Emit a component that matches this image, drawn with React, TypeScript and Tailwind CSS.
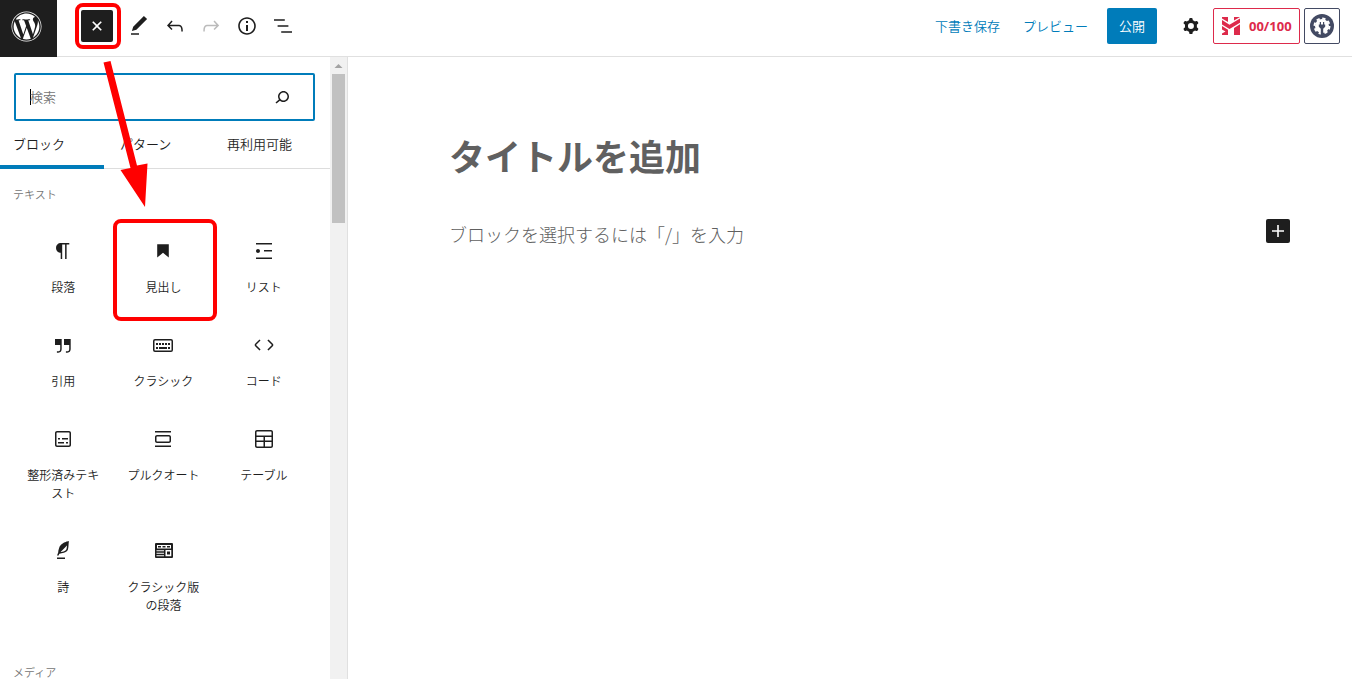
import React, { useState } from 'react';
import { FaWordpress } from 'react-icons/fa';

interface IconProps {
  path: string;
  className?: string;
}

const Icon: React.FC<IconProps> = ({ path, className = 'w-6 h-6' }) => (
  <svg viewBox="0 0 24 24" className={className} fill="currentColor" fillRule="evenodd" aria-hidden="true">
    <path d={path} />
  </svg>
);

const icons = {
  plus: 'M18 11.2h-5.2V6h-1.6v5.2H6v1.6h5.2V18h1.6v-5.2H18z',
  edit: 'M20.1 5.1L16.9 2 6.2 12.7l-1.3 4.4 4.5-1.3L20.1 5.1zM4 20.8h8v-1.5H4v1.5z',
  undo: 'M18.3 11.7c-.6-.6-1.4-.9-2.3-.9H6.7l2.9-3.3-1.1-1-4.5 5L8.5 16l1-1-2.7-2.7H16c.5 0 .9.2 1.3.5 1 1 1 3.4 1 4.5v.3h1.5v-.2c0-1.5 0-4.3-1.5-5.7z',
  redo: 'M15.6 6.5l-1.1 1 2.9 3.3H8c-.9 0-1.7.3-2.3.9-1.4 1.5-1.4 4.2-1.4 5.6v.2h1.5v-.3c0-1.1 0-3.5 1-4.5.3-.3.7-.5 1.3-.5h9.2L14.5 15l1.1 1.1 4.6-4.6-4.6-5z',
  info: 'M12 3.2c-4.8 0-8.8 3.9-8.8 8.8 0 4.8 3.9 8.8 8.8 8.8 4.8 0 8.8-3.9 8.8-8.8 0-4.8-4-8.8-8.8-8.8zm0 16c-4 0-7.2-3.3-7.2-7.2C4.8 8 8 4.8 12 4.8s7.2 3.3 7.2 7.2c0 4-3.2 7.2-7.2 7.2zM11 17h2v-6h-2v6zm0-8h2V7h-2v2z',
  listView: 'M13.8 5.2H3v1.5h10.8V5.2zm-3.6 12v1.5H21v-1.5H10.2zm7.2-6H6.6v1.5h10.8v-1.5z',
  search: 'M13.5 6C10.5 6 8 8.5 8 11.5c0 1.1.3 2.1.9 3l-3.4 3 1 1.1 3.4-2.9c1 .9 2.2 1.4 3.6 1.4 3 0 5.5-2.5 5.5-5.5C19 8.5 16.5 6 13.5 6zm0 9.5c-2.2 0-4-1.8-4-4s1.8-4 4-4 4 1.8 4 4-1.8 4-4 4z',
  cog: 'M10.289 4.836A1 1 0 0111.275 4h1.306a1 1 0 01.987.836l.244 1.466c.787.26 1.503.679 2.108 1.218l1.393-.522a1 1 0 011.216.437l.653 1.13a1 1 0 01-.23 1.273l-1.148.944a6.025 6.025 0 010 2.435l1.149.946a1 1 0 01.23 1.272l-.653 1.13a1 1 0 01-1.216.437l-1.394-.522c-.605.54-1.32.958-2.108 1.218l-.244 1.466a1 1 0 01-.987.836h-1.306a1 1 0 01-.986-.836l-.244-1.466a5.995 5.995 0 01-2.108-1.218l-1.394.522a1 1 0 01-1.217-.436l-.653-1.131a1 1 0 01.23-1.272l1.149-.946a6.026 6.026 0 010-2.435l-1.148-.944a1 1 0 01-.23-1.272l.653-1.131a1 1 0 011.217-.437l1.393.522a5.994 5.994 0 012.108-1.218l.244-1.466zM14.929 12a3 3 0 11-6 0 3 3 0 016 0z',
  paragraph: 'M18.3 4H9.9v-.1l-.9.2c-2.3.4-4 2.4-4 4.8s1.7 4.4 4 4.8l.7.1V20h1.5V5.5h2.9V20h1.5V5.5h2.7V4z',
  heading: 'M6.2 5.2v13.4l5.8-4.8 5.8 4.8V5.2z',
  list: 'M4 4v1.5h16V4H4zm8 8.5h8V11h-8v1.5zM4 20h16v-1.5H4V20zm4-8c0-1.1-.9-2-2-2s-2 .9-2 2 .9 2 2 2 2-.9 2-2z',
  quote: 'M13 6v6h5.2v4c0 .8-.2 1.4-.5 1.7-.6.6-1.6.6-2.5.5h-.3v1.5h.5c1 0 2.3-.1 3.3-1 .6-.6 1-1.6 1-2.8V6H13zm-9 6h5.2v4c0 .8-.2 1.4-.5 1.7-.6.6-1.6.6-2.5.5h-.3v1.5h.5c1 0 2.3-.1 3.3-1 .6-.6 1-1.6 1-2.8V6H4v6z',
  classic: 'M4 6h16a2 2 0 012 2v9a2 2 0 01-2 2H4a2 2 0 01-2-2V8a2 2 0 012-2zm0 1.500a.5.5 0 00-.5.5v9c0 .3.2.5.5.5h16a.5.5 0 00.5-.5V8a.5.5 0 00-.5-.5H4zM5 10h2v2H5zm3 0h2v2H8zm3 0h2v2h-2zm3 0h2v2h-2zm3 0h2v2h-2zM5 14h2v2H5zm3 0h8v2H8zm9 0h2v2h-2z',
  code: 'M20.8 10.7l-4.3-4.3-1.1 1.1 4.3 4.3c.1.1.1.3 0 .4l-4.3 4.3 1.1 1.1 4.3-4.3c.7-.8.7-1.9 0-2.6zM4.2 11.8l4.3-4.3-1-1-4.3 4.3c-.7.7-.7 1.8 0 2.5l4.3 4.3 1.1-1.1-4.3-4.3c-.2-.1-.2-.3-.1-.4z',
  preformatted: 'M18 4H6c-1.1 0-2 .9-2 2v12c0 1.1.9 2 2 2h12c1.1 0 2-.9 2-2V6c0-1.1-.9-2-2-2zm.5 14c0 .3-.2.5-.5.5H6c-.3 0-.5-.2-.5-.5V6c0-.3.2-.5.5-.5h12c.3 0 .5.2.5.5v12zM7 16.5h6V15H7v1.5zm4-4h6V11h-6v1.5zM9 11H7v1.5h2V11zm6 5.5h2V15h-2v1.5z',
  pullquote: 'M18 8H6c-1.1 0-2 .9-2 2v4c0 1.1.9 2 2 2h12c1.1 0 2-.9 2-2v-4c0-1.1-.9-2-2-2zm.5 6c0 .3-.2.5-.5.5H6c-.3 0-.5-.2-.5-.5v-4c0-.3.2-.5.5-.5h12c.3 0 .5.2.5.5v4zM4 4h16v1.5H4V4zm0 16h16v-1.5H4V20z',
  table: 'M19 3H5c-1.1 0-2 .9-2 2v14c0 1.1.9 2 2 2h14c1.1 0 2-.9 2-2V5c0-1.1-.9-2-2-2zM5 4.5h14c.3 0 .5.2.5.5v3.5h-15V5c0-.3.2-.5.5-.5zm8 5.5h6.5v3.5H13V10zm-1.5 3.5h-7V10h7v3.5zm-7 5.5v-4h7v4.5H5c-.3 0-.5-.2-.5-.5zm14.5.5h-6V15h6.5v4c0 .3-.2.5-.5.5z',
  verse: 'M17.8 2l-.9.3c-.1 0-3.6 1-5.2 2.1C10 5.5 9.3 6.5 8.9 7.1c-.6.9-1.7 4.7-1.7 6.3l-.9 2.3c-.2.4 0 .8.4 1 .1 0 .2.1.3.1.3 0 .6-.2.7-.5l.6-1.5c.3 0 .7-.1 1.2-.2.7-.1 1.4-.3 2.2-.5.8-.2 1.6-.5 2.4-.8.7-.3 1.4-.7 1.9-1.2s.8-1.2 1-1.9c.2-.7.3-1.6.4-2.4.1-.8.1-1.7.2-2.5 0-.8.1-1.5.2-2.1V2zm-1.9 5.6c-.1.8-.2 1.5-.3 2.1-.2.6-.4 1-.6 1.3-.3.3-.8.6-1.4.9-.7.3-1.4.5-2.2.8-.6.2-1.3.3-1.8.4L15 7.5c.3-.3.6-.7 1-1.1 0 .4 0 .8-.1 1.2zM6 20h8v-1.5H6V20z',
  classicParagraph: 'M5 4h16a1 1 0 011 1v13a1 1 0 01-1 1H5a1 1 0 01-1-1V5a1 1 0 011-1zM6 6v3.500h14V6H6zm1 1h3v1.500H7zm4.500 0h3v1.500h-3zm4.500 0h3v1.500h-3zM5.500 11.200h7.500v1H5.500zm0 2.500h7.500v1H5.500zm0 2.500h7.500v1H5.500zM14.500 11v6.200h5.800V11h-5.800zm1.500 1.600h3v3h-3z',
};

const tools = [
  { label: 'ツール', icon: icons.edit, disabled: false },
  { label: '元に戻す', icon: icons.undo, disabled: false },
  { label: 'やり直す', icon: icons.redo, disabled: true },
  { label: '詳細', icon: icons.info, disabled: false },
  { label: 'リスト表示', icon: icons.listView, disabled: false },
];

const tabs = ['ブロック', 'パターン', '再利用可能'];

const blocks = [
  { name: '段落', icon: icons.paragraph },
  { name: '見出し', icon: icons.heading, marked: true },
  { name: 'リスト', icon: icons.list },
  { name: '引用', icon: icons.quote },
  { name: 'クラシック', icon: icons.classic },
  { name: 'コード', icon: icons.code },
  { name: '整形済みテキスト', icon: icons.preformatted },
  { name: 'プルクオート', icon: icons.pullquote },
  { name: 'テーブル', icon: icons.table },
  { name: '詩', icon: icons.verse },
  { name: 'クラシック版の段落', icon: icons.classicParagraph },
];

const Header: React.FC = () => (
  <header className="flex shrink-0">
    <a href="#" aria-label="投稿を表示" className="flex w-[57px] h-[57px] items-center justify-center bg-[#1e1e1e] text-white pr-1 pb-1">
      <FaWordpress className="w-[31px] h-[31px]" />
    </a>
    <div className="flex flex-1 items-center justify-between h-[57px] border-b border-[#e0e0e0] pl-6 pr-3 pb-1">
      <div className="flex items-center">
        <button aria-label="ブロック挿入ツールを閉じる" className="relative flex w-8 h-8 mr-2 items-center justify-center rounded-xs bg-[#1e1e1e] text-white">
          <Icon path={icons.plus} className="w-6 h-6 rotate-45" />
          <span className="absolute -inset-y-[7px] -left-[6px] -right-2 border-4 border-[#ff0000] rounded-lg" />
        </button>
        {tools.map(tool => (
          <button
            key={tool.label}
            aria-label={tool.label}
            disabled={tool.disabled}
            className={`flex w-9 h-9 items-center justify-center ${tool.disabled ? 'text-[#bbbbbb]' : ''}`}
          >
            <Icon path={tool.icon} />
          </button>
        ))}
      </div>
      <div className="flex items-center text-[13px] leading-[18px]">
        <button className="text-[#007cba]">下書き保存</button>
        <button className="ml-[23px] text-[#007cba]">プレビュー</button>
        <button className="ml-[19px] h-9 px-3 rounded-xs bg-[#007cba] text-white">公開</button>
        <button aria-label="設定" className="flex w-9 h-9 ml-4 items-center justify-center">
          <Icon path={icons.cog} />
        </button>
        <button className="flex w-[87px] h-9 ml-1 items-center gap-[9px] pl-2 rounded-xs border border-[#dd2a4b] text-[#dd2a4b] font-bold font-['Noto_Sans','Noto_Sans_CJK_JP',sans-serif]">
          <svg viewBox="0 0 18 18" className="w-[18px] h-[18px]" fill="currentColor" aria-hidden="true">
            <path d="M0 0h6v5L0 1.500zM12 0h6l-6 3.500zM0 3l7.500 4.800L18 1.500v4.200L7.500 12 0 7.500zM0 9l6 3.800V18H0v-1.500l3.500-2L0 12.500zM18 7.300V18h-6v-7z" />
          </svg>
          00/100
        </button>
        <button aria-label="プラグイン設定" className="flex w-9 h-9 ml-1 items-center justify-center rounded-xs border border-[#434a63] text-[#434a63]">
          <svg viewBox="0 0 24 24" className="w-6 h-6" aria-hidden="true">
            <circle cx="12" cy="12" r="12" fill="currentColor" />
            <circle cx="12" cy="12" r="7" fill="#fff" />
            <circle cx="12" cy="12" r="7.500" fill="none" stroke="#fff" strokeWidth="2" strokeDasharray="3.300 2.590" />
            <path d="M9.800 8h1.200v2.500h2V8h1.200v2.500h1v2.200l-2 2V21h-2.400v-6.300l-2-2v-2.200h1z" fill="currentColor" />
          </svg>
        </button>
      </div>
    </div>
  </header>
);

const Inserter: React.FC = () => {
  const [activeTab, setActiveTab] = useState(tabs[0]);

  return (
    <aside className="flex w-[348px] shrink-0 border-r border-[#e0e0e0]">
      <div className="flex-1 min-w-0 overflow-hidden">
        <div className="pt-4 pl-[14px] pr-[15px]">
          <label className="flex h-12 items-center rounded-xs border-2 border-[#007cba] pl-[14px] pr-[19px]">
            <span className="w-px h-4 -mr-px bg-black" />
            <input
              type="search"
              aria-label="検索"
              placeholder="検索"
              className="flex-1 min-w-0 text-[13px] outline-none placeholder:text-[#757575]"
            />
            <Icon path={icons.search} />
          </label>
        </div>
        <div role="tablist" className="flex h-12 gap-[3px] border-b border-[#dddddd]">
          {tabs.map(tab => (
            <button
              key={tab}
              role="tab"
              aria-selected={tab === activeTab}
              onClick={() => setActiveTab(tab)}
              className={`w-26 h-12 pl-[13px] pt-0.5 text-left text-[13px] border-b-4 ${
                tab === activeTab ? 'border-[#007cba]' : 'border-transparent'
              }`}
            >
              {tab}
            </button>
          ))}
        </div>
        <h2 className="px-[13px] py-4 text-[11px] leading-[18px] text-[#757575]">テキスト</h2>
        <div className="grid grid-cols-3 pl-[13px] pr-4 pb-4">
          {blocks.map(block => (
            <button
              key={block.name}
              className="relative flex flex-col items-center gap-[15px] px-[10px] pt-5 pb-[17px] text-xs leading-[18px]"
            >
              <Icon path={block.icon} />
              <span>{block.name}</span>
              {block.marked && (
                <span className="absolute top-0 left-0 -right-[3px] -bottom-2 border-4 border-[#ff0000] rounded-lg" />
              )}
            </button>
          ))}
        </div>
        <h2 className="px-[13px] py-4 text-[11px] leading-[18px] text-[#757575]">メディア</h2>
      </div>
      <div className="flex w-[17px] flex-col items-center bg-[#f1f1f1]">
        <svg viewBox="0 0 17 17" className="w-[17px] h-[17px]" aria-hidden="true">
          <path d="M4.500 11l4-4 4 4z" fill="#a3a3a3" />
        </svg>
        <div className="w-[13px] h-[149px] bg-[#c1c1c1]" />
      </div>
    </aside>
  );
};

const Editor: React.FC = () => (
  <main className="flex-1 pl-[101px] pr-[62px] pt-[74px] text-[#606060]">
    <h1 className="text-4xl leading-[48px] font-bold">タイトルを追加</h1>
    <div className="flex items-start justify-between pt-10">
      <p className="text-lg leading-[30px] font-light">ブロックを選択するには「/」を入力</p>
      <button aria-label="ブロックを追加" className="rounded-xs bg-[#1e1e1e] text-white">
        <Icon path={icons.plus} />
      </button>
    </div>
  </main>
);

export default function App() {
  return (
    <div className="relative flex flex-col h-screen overflow-hidden bg-white text-[#1e1e1e] font-[350] font-['Noto_Sans_CJK_JP',sans-serif]">
      <Header />
      <div className="flex flex-1 min-h-0">
        <Inserter />
        <Editor />
      </div>
      {/* arrow from the inserter toggle to the heading block */}
      <svg viewBox="0 0 50 150" className="absolute left-[100px] top-[60px] w-[50px] h-[150px] pointer-events-none" aria-hidden="true">
        <path d="M3.500 2.500l7-1.500 26.500 104.500 10.500-2-2.500 43.500-24.500-37 10-2z" fill="#ff0000" />
      </svg>
    </div>
  );
}
